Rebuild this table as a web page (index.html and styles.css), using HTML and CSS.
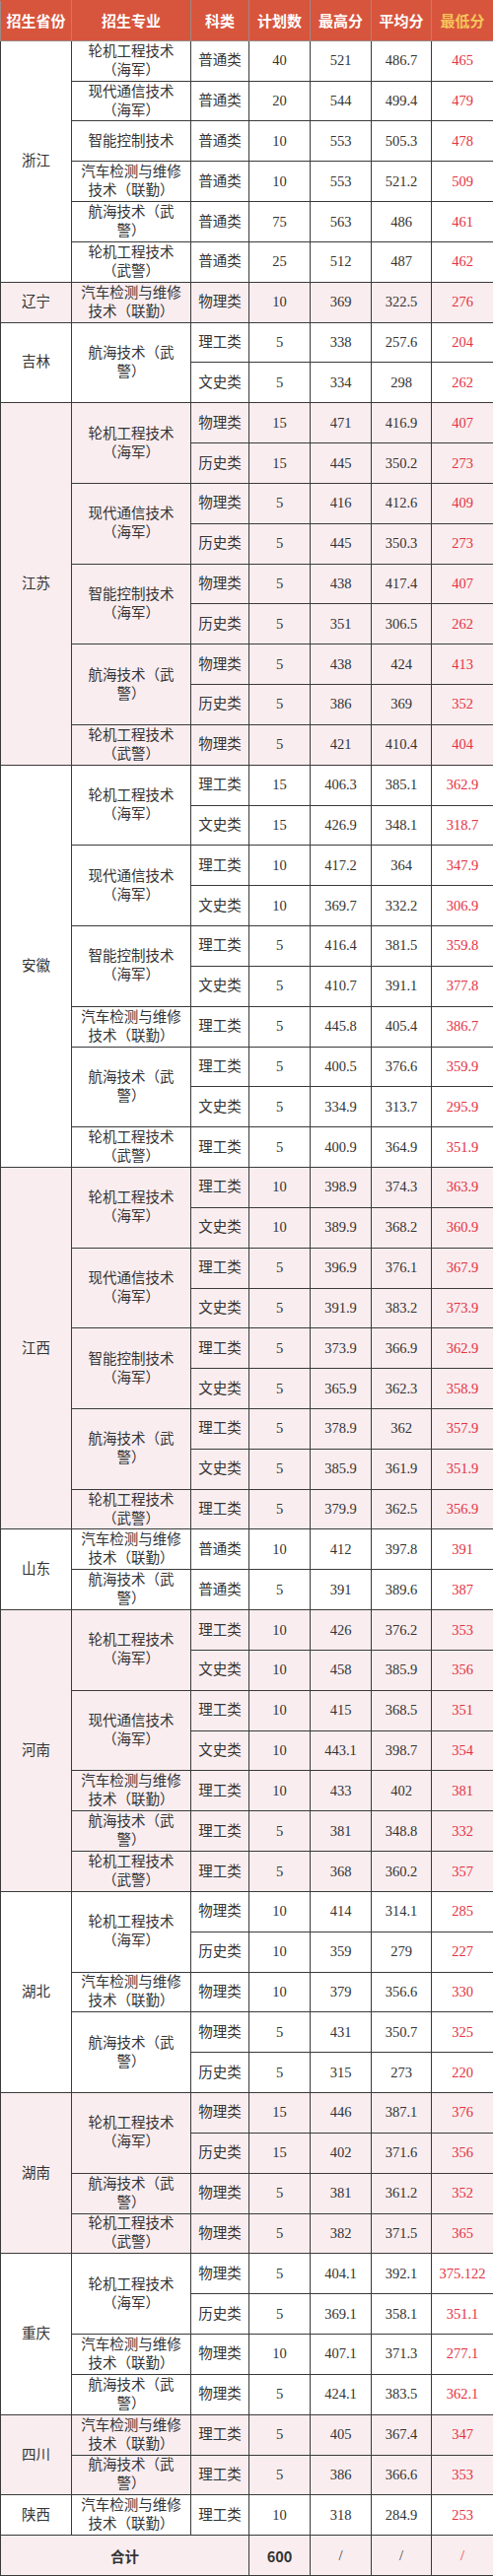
FILE: index.html
```html
<!DOCTYPE html>
<html lang="zh-CN">
<head>
<meta charset="utf-8">
<title>招生录取分数</title>
<link rel="stylesheet" href="styles.css">
</head>
<body>
<table class="score">
<colgroup>
<col class="c-prov"><col class="c-major"><col class="c-type"><col class="c-plan"><col class="c-max"><col class="c-avg"><col class="c-min">
</colgroup>
<thead>
<tr><th>招生省份</th><th>招生专业</th><th>科类</th><th>计划数</th><th>最高分</th><th>平均分</th><th class="hl">最低分</th></tr>
</thead>
<tbody>
<tr><td class="prov" rowspan="6">浙江</td><td class="major">轮机工程技术（海军）</td><td>普通类</td><td>40</td><td>521</td><td>486.7</td><td class="lo">465</td></tr>
<tr><td class="major">现代通信技术（海军）</td><td>普通类</td><td>20</td><td>544</td><td>499.4</td><td class="lo">479</td></tr>
<tr><td class="major">智能控制技术</td><td>普通类</td><td>10</td><td>553</td><td>505.3</td><td class="lo">478</td></tr>
<tr><td class="major">汽车检测与维修技术（联勤）</td><td>普通类</td><td>10</td><td>553</td><td>521.2</td><td class="lo">509</td></tr>
<tr><td class="major">航海技术（武警）</td><td>普通类</td><td>75</td><td>563</td><td>486</td><td class="lo">461</td></tr>
<tr><td class="major">轮机工程技术（武警）</td><td>普通类</td><td>25</td><td>512</td><td>487</td><td class="lo">462</td></tr>
</tbody>
<tbody class="alt">
<tr><td class="prov">辽宁</td><td class="major">汽车检测与维修技术（联勤）</td><td>物理类</td><td>10</td><td>369</td><td>322.5</td><td class="lo">276</td></tr>
</tbody>
<tbody>
<tr><td class="prov" rowspan="2">吉林</td><td class="major" rowspan="2">航海技术（武警）</td><td>理工类</td><td>5</td><td>338</td><td>257.6</td><td class="lo">204</td></tr>
<tr><td>文史类</td><td>5</td><td>334</td><td>298</td><td class="lo">262</td></tr>
</tbody>
<tbody class="alt">
<tr><td class="prov" rowspan="9">江苏</td><td class="major" rowspan="2">轮机工程技术（海军）</td><td>物理类</td><td>15</td><td>471</td><td>416.9</td><td class="lo">407</td></tr>
<tr><td>历史类</td><td>15</td><td>445</td><td>350.2</td><td class="lo">273</td></tr>
<tr><td class="major" rowspan="2">现代通信技术（海军）</td><td>物理类</td><td>5</td><td>416</td><td>412.6</td><td class="lo">409</td></tr>
<tr><td>历史类</td><td>5</td><td>445</td><td>350.3</td><td class="lo">273</td></tr>
<tr><td class="major" rowspan="2">智能控制技术（海军）</td><td>物理类</td><td>5</td><td>438</td><td>417.4</td><td class="lo">407</td></tr>
<tr><td>历史类</td><td>5</td><td>351</td><td>306.5</td><td class="lo">262</td></tr>
<tr><td class="major" rowspan="2">航海技术（武警）</td><td>物理类</td><td>5</td><td>438</td><td>424</td><td class="lo">413</td></tr>
<tr><td>历史类</td><td>5</td><td>386</td><td>369</td><td class="lo">352</td></tr>
<tr><td class="major">轮机工程技术（武警）</td><td>物理类</td><td>5</td><td>421</td><td>410.4</td><td class="lo">404</td></tr>
</tbody>
<tbody>
<tr><td class="prov" rowspan="10">安徽</td><td class="major" rowspan="2">轮机工程技术（海军）</td><td>理工类</td><td>15</td><td>406.3</td><td>385.1</td><td class="lo">362.9</td></tr>
<tr><td>文史类</td><td>15</td><td>426.9</td><td>348.1</td><td class="lo">318.7</td></tr>
<tr><td class="major" rowspan="2">现代通信技术（海军）</td><td>理工类</td><td>10</td><td>417.2</td><td>364</td><td class="lo">347.9</td></tr>
<tr><td>文史类</td><td>10</td><td>369.7</td><td>332.2</td><td class="lo">306.9</td></tr>
<tr><td class="major" rowspan="2">智能控制技术（海军）</td><td>理工类</td><td>5</td><td>416.4</td><td>381.5</td><td class="lo">359.8</td></tr>
<tr><td>文史类</td><td>5</td><td>410.7</td><td>391.1</td><td class="lo">377.8</td></tr>
<tr><td class="major">汽车检测与维修技术（联勤）</td><td>理工类</td><td>5</td><td>445.8</td><td>405.4</td><td class="lo">386.7</td></tr>
<tr><td class="major" rowspan="2">航海技术（武警）</td><td>理工类</td><td>5</td><td>400.5</td><td>376.6</td><td class="lo">359.9</td></tr>
<tr><td>文史类</td><td>5</td><td>334.9</td><td>313.7</td><td class="lo">295.9</td></tr>
<tr><td class="major">轮机工程技术（武警）</td><td>理工类</td><td>5</td><td>400.9</td><td>364.9</td><td class="lo">351.9</td></tr>
</tbody>
<tbody class="alt">
<tr><td class="prov" rowspan="9">江西</td><td class="major" rowspan="2">轮机工程技术（海军）</td><td>理工类</td><td>10</td><td>398.9</td><td>374.3</td><td class="lo">363.9</td></tr>
<tr><td>文史类</td><td>10</td><td>389.9</td><td>368.2</td><td class="lo">360.9</td></tr>
<tr><td class="major" rowspan="2">现代通信技术（海军）</td><td>理工类</td><td>5</td><td>396.9</td><td>376.1</td><td class="lo">367.9</td></tr>
<tr><td>文史类</td><td>5</td><td>391.9</td><td>383.2</td><td class="lo">373.9</td></tr>
<tr><td class="major" rowspan="2">智能控制技术（海军）</td><td>理工类</td><td>5</td><td>373.9</td><td>366.9</td><td class="lo">362.9</td></tr>
<tr><td>文史类</td><td>5</td><td>365.9</td><td>362.3</td><td class="lo">358.9</td></tr>
<tr><td class="major" rowspan="2">航海技术（武警）</td><td>理工类</td><td>5</td><td>378.9</td><td>362</td><td class="lo">357.9</td></tr>
<tr><td>文史类</td><td>5</td><td>385.9</td><td>361.9</td><td class="lo">351.9</td></tr>
<tr><td class="major">轮机工程技术（武警）</td><td>理工类</td><td>5</td><td>379.9</td><td>362.5</td><td class="lo">356.9</td></tr>
</tbody>
<tbody>
<tr><td class="prov" rowspan="2">山东</td><td class="major">汽车检测与维修技术（联勤）</td><td>普通类</td><td>10</td><td>412</td><td>397.8</td><td class="lo">391</td></tr>
<tr><td class="major">航海技术（武警）</td><td>普通类</td><td>5</td><td>391</td><td>389.6</td><td class="lo">387</td></tr>
</tbody>
<tbody class="alt">
<tr><td class="prov" rowspan="7">河南</td><td class="major" rowspan="2">轮机工程技术（海军）</td><td>理工类</td><td>10</td><td>426</td><td>376.2</td><td class="lo">353</td></tr>
<tr><td>文史类</td><td>10</td><td>458</td><td>385.9</td><td class="lo">356</td></tr>
<tr><td class="major" rowspan="2">现代通信技术（海军）</td><td>理工类</td><td>10</td><td>415</td><td>368.5</td><td class="lo">351</td></tr>
<tr><td>文史类</td><td>10</td><td>443.1</td><td>398.7</td><td class="lo">354</td></tr>
<tr><td class="major">汽车检测与维修技术（联勤）</td><td>理工类</td><td>10</td><td>433</td><td>402</td><td class="lo">381</td></tr>
<tr><td class="major">航海技术（武警）</td><td>理工类</td><td>5</td><td>381</td><td>348.8</td><td class="lo">332</td></tr>
<tr><td class="major">轮机工程技术（武警）</td><td>理工类</td><td>5</td><td>368</td><td>360.2</td><td class="lo">357</td></tr>
</tbody>
<tbody>
<tr><td class="prov" rowspan="5">湖北</td><td class="major" rowspan="2">轮机工程技术（海军）</td><td>物理类</td><td>10</td><td>414</td><td>314.1</td><td class="lo">285</td></tr>
<tr><td>历史类</td><td>10</td><td>359</td><td>279</td><td class="lo">227</td></tr>
<tr><td class="major">汽车检测与维修技术（联勤）</td><td>物理类</td><td>10</td><td>379</td><td>356.6</td><td class="lo">330</td></tr>
<tr><td class="major" rowspan="2">航海技术（武警）</td><td>物理类</td><td>5</td><td>431</td><td>350.7</td><td class="lo">325</td></tr>
<tr><td>历史类</td><td>5</td><td>315</td><td>273</td><td class="lo">220</td></tr>
</tbody>
<tbody class="alt">
<tr><td class="prov" rowspan="4">湖南</td><td class="major" rowspan="2">轮机工程技术（海军）</td><td>物理类</td><td>15</td><td>446</td><td>387.1</td><td class="lo">376</td></tr>
<tr><td>历史类</td><td>15</td><td>402</td><td>371.6</td><td class="lo">356</td></tr>
<tr><td class="major">航海技术（武警）</td><td>物理类</td><td>5</td><td>381</td><td>361.2</td><td class="lo">352</td></tr>
<tr><td class="major">轮机工程技术（武警）</td><td>物理类</td><td>5</td><td>382</td><td>371.5</td><td class="lo">365</td></tr>
</tbody>
<tbody>
<tr><td class="prov" rowspan="4">重庆</td><td class="major" rowspan="2">轮机工程技术（海军）</td><td>物理类</td><td>5</td><td>404.1</td><td>392.1</td><td class="lo">375.122</td></tr>
<tr><td>历史类</td><td>5</td><td>369.1</td><td>358.1</td><td class="lo">351.1</td></tr>
<tr><td class="major">汽车检测与维修技术（联勤）</td><td>物理类</td><td>10</td><td>407.1</td><td>371.3</td><td class="lo">277.1</td></tr>
<tr><td class="major">航海技术（武警）</td><td>物理类</td><td>5</td><td>424.1</td><td>383.5</td><td class="lo">362.1</td></tr>
</tbody>
<tbody class="alt">
<tr><td class="prov" rowspan="2">四川</td><td class="major">汽车检测与维修技术（联勤）</td><td>理工类</td><td>5</td><td>405</td><td>367.4</td><td class="lo">347</td></tr>
<tr><td class="major">航海技术（武警）</td><td>理工类</td><td>5</td><td>386</td><td>366.6</td><td class="lo">353</td></tr>
</tbody>
<tbody>
<tr><td class="prov">陕西</td><td class="major">汽车检测与维修技术（联勤）</td><td>理工类</td><td>10</td><td>318</td><td>284.9</td><td class="lo">253</td></tr>
</tbody>
<tfoot class="alt">
<tr><td class="total" colspan="3">合计</td><td class="total">600</td><td>/</td><td>/</td><td class="lo">/</td></tr>
</tfoot>
</table>
</body>
</html>
```
FILE: styles.css
```css
html, body {
  margin: 0;
  padding: 0;
  background: #ffffff;
}

.score {
  width: 500px;
  border-collapse: collapse;
  table-layout: fixed;
  font-family: "Liberation Serif", "Noto Sans CJK SC", serif;
  font-size: 14.5px;
  line-height: 19px;
  color: #333333;
  text-spacing-trim: space-all;
}

.c-prov { width: 72px; }
.c-major { width: 121px; }
.c-type { width: 59px; }
.c-plan { width: 62px; }
.c-max { width: 62px; }
.c-avg { width: 61px; }
.c-min { width: 63px; }

.score tr {
  height: 40.84px;
}

.score th,
.score td {
  border: 1px solid #3a3a3a;
  padding: 0 2px;
  text-align: center;
  vertical-align: middle;
  overflow: hidden;
}

.score td.major {
  padding: 0 8px;
}

.score th {
  background: #d7553d;
  color: #ffffff;
  font-family: "Noto Sans CJK SC", sans-serif;
  font-weight: 700;
  font-size: 15px;
  padding: 0;
  white-space: nowrap;
  border-color: #9c8a86;
  border-top-color: #d7553d;
}

.score th.hl {
  color: #f6c35a;
}

.score .alt td {
  background: #f9edef;
}

.score td.lo {
  color: #e5323f;
}

.score td.total {
  font-weight: 700;
  font-family: "Noto Sans CJK SC", sans-serif;
}
```
